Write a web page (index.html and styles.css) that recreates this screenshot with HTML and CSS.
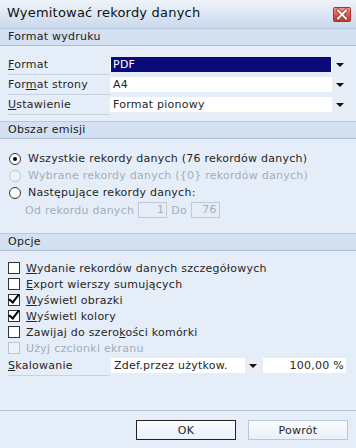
FILE: index.html
```html
<!DOCTYPE html>
<html lang="pl">
<head>
    <meta charset="UTF-8">
    <title>Wyemitować rekordy danych</title>
    <link rel="stylesheet" href="styles.css">
</head>
<body>
    <div class="dialog">
        <div class="titlebar">
            <span class="title">Wyemitować rekordy danych</span>
            <span class="close">
                <svg width="18" height="15" viewBox="0 0 18 15">
                    <defs>
                        <linearGradient id="cg" x1="0" y1="0" x2="0" y2="1">
                            <stop offset="0" stop-color="#f09a8c"/>
                            <stop offset="0.5" stop-color="#e0574a"/>
                            <stop offset="1" stop-color="#c8392e"/>
                        </linearGradient>
                    </defs>
                    <rect x="0.5" y="0.5" width="17" height="14" rx="1" fill="url(#cg)" stroke="#a8342c"/>
                    <path d="M5 3.5 L13 11.5 M13 3.5 L5 11.5" stroke="#8a2a22" stroke-width="3.4" stroke-linecap="square"/>
                    <path d="M5 3.5 L13 11.5 M13 3.5 L5 11.5" stroke="#fff" stroke-width="2" stroke-linecap="square"/>
                </svg>
            </span>
        </div>

        <div class="section-head">Format wydruku</div>
        <div class="section format">
            <div class="row">
                <span class="lbl"><u>F</u>ormat</span>
                <div class="combo"><span class="value selected">PDF</span><span class="arrow"></span></div>
            </div>
            <div class="row">
                <span class="lbl">For<u>m</u>at strony</span>
                <div class="combo"><span class="value">A4</span><span class="arrow"></span></div>
            </div>
            <div class="row">
                <span class="lbl"><u>U</u>stawienie</span>
                <div class="combo"><span class="value">Format pionowy</span><span class="arrow"></span></div>
            </div>
        </div>

        <div class="section-head">Obszar emisji</div>
        <div class="section range">
            <div class="radio-row"><span class="radio checked"></span>Wszystkie rekordy danych (76 rekordów danych)</div>
            <div class="radio-row disabled"><span class="radio"></span>Wybrane rekordy danych ({0} rekordów danych)</div>
            <div class="radio-row"><span class="radio"></span>Następujące rekordy danych:</div>
            <div class="range-row">
                <span>Od rekordu danych</span>
                <span class="num">1</span>
                <span>Do</span>
                <span class="num">76</span>
            </div>
        </div>

        <div class="section-head">Opcje</div>
        <div class="section options">
            <div class="check-row"><span class="check"></span><span><u>W</u>ydanie rekordów danych szczegółowych</span></div>
            <div class="check-row"><span class="check"></span><span><u>E</u>xport wierszy sumujących</span></div>
            <div class="check-row"><span class="check checked"></span><span><u>W</u>yświetl obrazki</span></div>
            <div class="check-row"><span class="check checked"></span><span><u>W</u>yświetl kolory</span></div>
            <div class="check-row"><span class="check"></span><span>Zawijaj do szero<u>k</u>ości komórki</span></div>
            <div class="check-row disabled"><span class="check"></span><span>Użyj czcionki ekranu</span></div>
            <div class="row scale">
                <span class="lbl"><u>S</u>kalowanie</span>
                <div class="combo small"><span class="value">Zdef.przez użytkow.</span><span class="arrow"></span></div>
                <div class="percent">100,00 %</div>
            </div>
        </div>

        <div class="footer">
            <button class="btn default">OK</button>
            <button class="btn">Powrót</button>
        </div>
    </div>
</body>
</html>
```

FILE: styles.css
```css
body {
    margin: 0;
    font-family: "DejaVu Sans", Verdana, sans-serif;
    font-size: 11px;
    letter-spacing: 0.25px;
    color: #262626;
    background: #e5edf8;
}
.dialog {
    width: 356px;
    height: 448px;
    background: #e5edf8;
    overflow: hidden;
}
.titlebar {
    height: 28px;
    display: flex;
    align-items: center;
    justify-content: space-between;
    padding: 0 5px 4px 7px;
    box-sizing: border-box;
    background: linear-gradient(#eef3fa, #d9e4f2 60%, #c9d8eb);
}
.title {
    font-size: 13px;
    letter-spacing: 0.2px;
    color: #111;
}
.close {
    display: flex;
    margin-top: 4px;
}
.section-head {
    height: 16px;
    line-height: 16px;
    padding-left: 8px;
    background: #d3e0f1;
    border-top: 1px solid #b9cade;
    border-bottom: 1px solid #a9bcd4;
    color: #222;
}
.section {
    padding: 0 9px 0 8px;
}
.format {
    padding-top: 9px;
    padding-bottom: 6px;
}
.row {
    display: flex;
    height: 20px;
}
.lbl {
    width: 102px;
    height: 19px;
    line-height: 19px;
    border-bottom: 1px solid #c6d2e2;
}
.combo {
    display: flex;
    width: 237px;
    height: 15px;
    margin-top: 2px;
    background: #fff;
}
.value {
    flex: 1;
    line-height: 15px;
    padding-left: 2px;
    margin: 0 1px;
}
.value.selected {
    background: #0a0a78;
    color: #fff;
}
.arrow {
    width: 15px;
    background: #e9eef5;
    position: relative;
}
.arrow::after {
    content: "";
    position: absolute;
    left: 4px;
    top: 6px;
    border-left: 4px solid transparent;
    border-right: 4px solid transparent;
    border-top: 4px solid #111;
}
.range {
    padding-top: 11px;
    padding-bottom: 14px;
}
.radio-row {
    display: flex;
    align-items: center;
    height: 17px;
}
.radio {
    width: 10px;
    height: 10px;
    border: 1px solid #333;
    border-radius: 50%;
    background: #fff;
    margin: 0 7px 0 1px;
    position: relative;
}
.radio.checked::after {
    content: "";
    position: absolute;
    left: 3px;
    top: 3px;
    width: 4px;
    height: 4px;
    border-radius: 50%;
    background: #000;
}
.disabled {
    color: #a4adba;
}
.disabled .radio,
.disabled .check {
    border-color: #bcc5d0;
    background: #edf2f9;
}
.range-row {
    display: flex;
    align-items: center;
    height: 18px;
    padding-left: 17px;
    color: #a4adba;
    gap: 4px;
}
.num {
    width: 25px;
    height: 14px;
    line-height: 14px;
    border: 1px solid #c0c9d4;
    text-align: right;
    padding-right: 2px;
}
.options {
    padding-top: 9px;
    padding-bottom: 37px;
}
.check-row {
    display: flex;
    align-items: center;
    height: 16px;
}
.check {
    width: 10px;
    height: 10px;
    border: 1px solid #333;
    background: #fff;
    margin-right: 6px;
    position: relative;
}
.check.checked::after {
    content: "";
    position: absolute;
    left: 2px;
    top: -3px;
    width: 4px;
    height: 9px;
    border-right: 2px solid #000;
    border-bottom: 2px solid #000;
    transform: rotate(38deg);
}
.scale {
    height: 17px;
}
.combo.small {
    width: 149px;
    margin-left: 1px;
}
.percent {
    width: 83px;
    height: 15px;
    line-height: 15px;
    margin: 2px 0 0 3px;
    background: #fff;
    text-align: right;
    padding-right: 2px;
    box-sizing: border-box;
}
.footer {
    display: flex;
    justify-content: flex-end;
    gap: 12px;
    padding: 9px 8px 0 0;
    border-top: 1px solid #b2c2d6;
}
.btn {
    width: 100px;
    height: 20px;
    font-family: "DejaVu Sans", Verdana, sans-serif;
    font-size: 11px;
    letter-spacing: 0.25px;
    color: #262626;
    background: linear-gradient(#fbfcfe, #eaf0f8);
    border: 1px solid #b7c6da;
    padding: 0;
}
.btn.default {
    border-color: #222;
}
```
